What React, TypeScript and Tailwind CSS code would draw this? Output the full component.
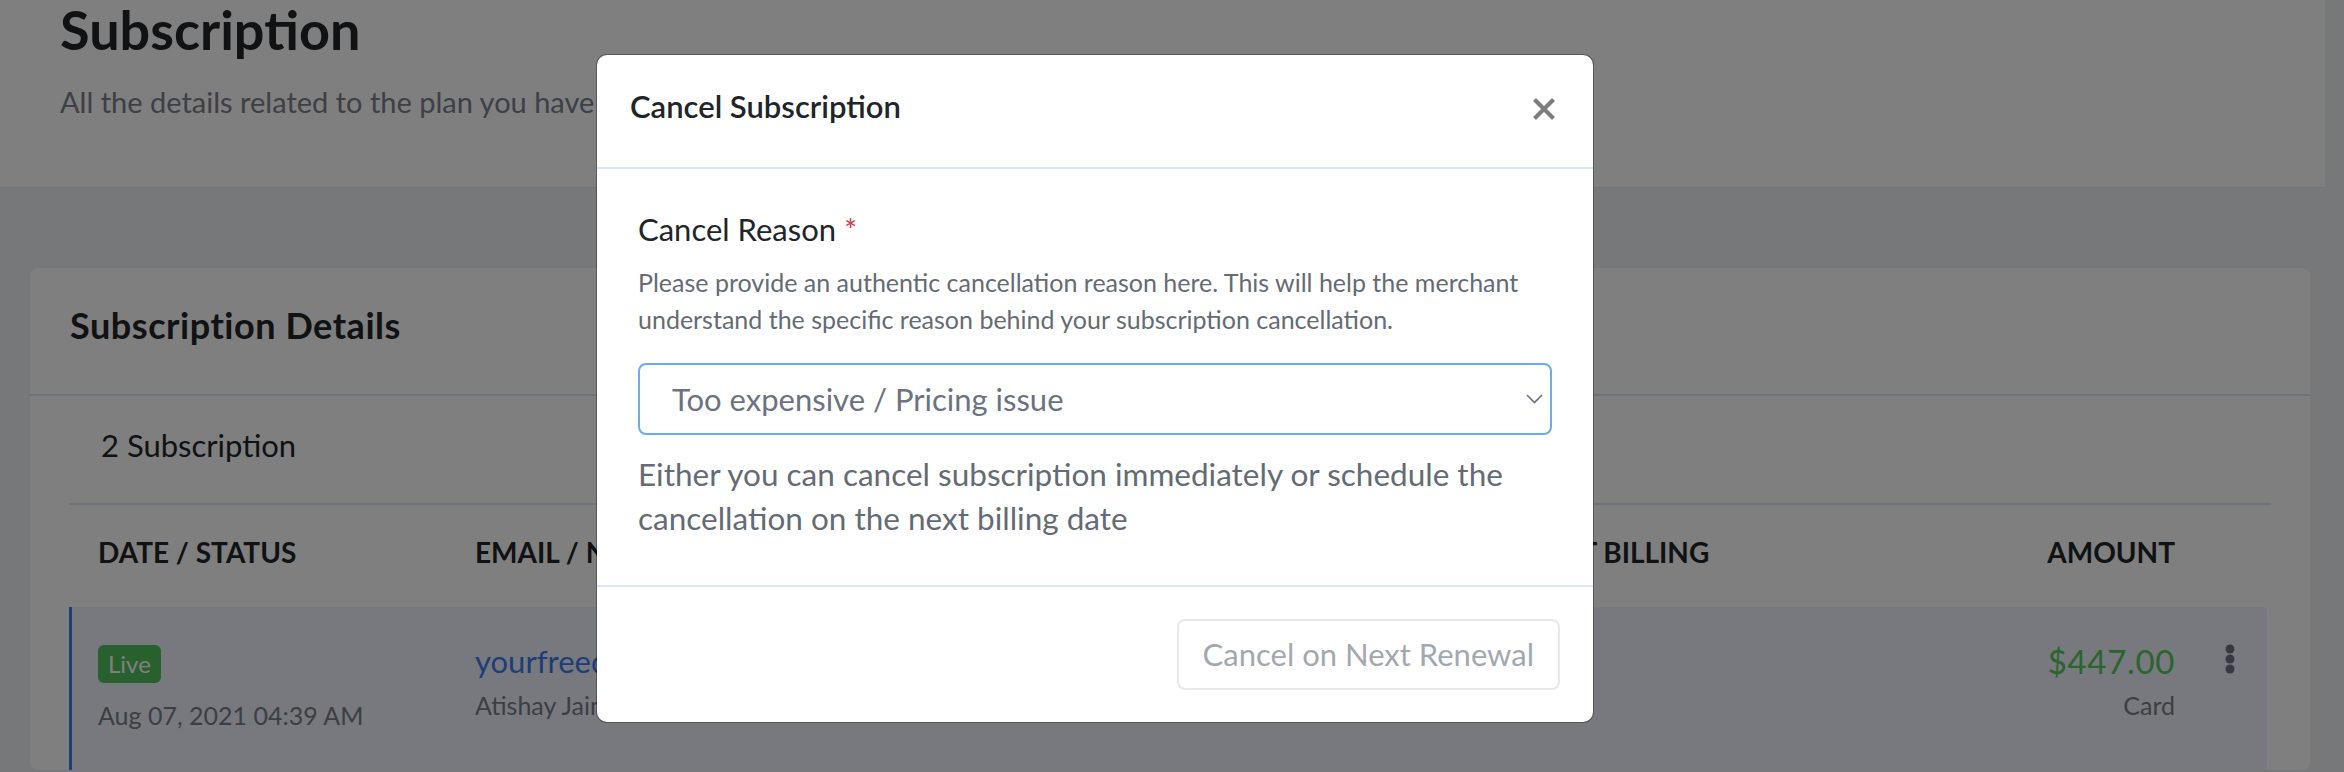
import { ReactNode } from "react";

const columns = [
  { label: "DATE / STATUS", width: "w-[377px]" },
  { label: "EMAIL / NAME", width: "w-[535px]" },
  { label: "PLAN", width: "w-[514px]" },
  { label: "NEXT BILLING", width: "w-[406px]" },
];

function KebabIcon() {
  return (
    <svg width="10" height="30" viewBox="0 0 10 30" fill="#6b7280">
      <circle cx="5" cy="5" r="4.5" />
      <circle cx="5" cy="15" r="4.5" />
      <circle cx="5" cy="25" r="4.5" />
    </svg>
  );
}

function CloseIcon() {
  return (
    <svg width="24" height="24" viewBox="0 0 24 24" fill="none" stroke="#7d7d7d" strokeWidth="4.2">
      <path d="M2.5 2.5l19 19M21.5 2.5l-19 19" />
    </svg>
  );
}

function Chevron() {
  return (
    <svg width="17" height="10" viewBox="0 0 17 10" fill="none" stroke="#6b7280" strokeWidth="1.6">
      <path d="M1 1l7.5 7.5L16 1" />
    </svg>
  );
}

function Cell({ width, children }: { width: string; children: ReactNode }) {
  return <div className={`${width} shrink-0`}>{children}</div>;
}

function SubscriptionRow() {
  return (
    <div className="flex w-[2198px] rounded-r-[4px] border-l-[3px] border-[#3b7cf5] bg-[#eff3fd] pb-[40px] pl-[26px] pt-[36px]">
      <Cell width="w-[377px]">
        <span className="mt-[2px] inline-block h-[38px] rounded-[6px] bg-[#52c25c] px-[10px] text-[24px] leading-[38px] text-white">
          Live
        </span>
        <p className="mt-[18px] text-[25px] leading-[29px] text-[#777e8a]">
          Aug 07, 2021 04:39 AM
        </p>
      </Cell>
      <Cell width="w-[535px]">
        <p className="text-[31px] leading-[36px] text-[#3d7bf0]">yourfreedomain@gmail.com</p>
        <p className="mt-[12px] text-[25px] leading-[29px] text-[#777e8a]">Atishay Jain</p>
      </Cell>
      <Cell width="w-[514px]">
        <p className="text-[31px] leading-[36px] text-[#212529]">Gold Plan</p>
      </Cell>
      <Cell width="w-[406px]">
        <span />
      </Cell>
      <div className="w-[245px] shrink-0 text-right">
        <p className="text-[33px] leading-[36px] tracking-[0.02em] text-[#56c85c]">$447.00</p>
        <p className="mt-[12px] text-[25px] leading-[29px] text-[#777e8a]">Card</p>
      </div>
      <div className="w-[95px] shrink-0 pl-[50px] pt-[1px]">
        <KebabIcon />
      </div>
    </div>
  );
}

function CancelModal() {
  return (
    <div className="absolute inset-0 flex items-start bg-black/50 pl-[597px] pt-[55px]">
      <div className="w-[996px] rounded-[10px] bg-white ring-1 ring-black/30">
        <div className="flex h-[114px] items-start justify-between border-b-2 border-[#dbe5f8] pl-[33px] pr-[37px] pt-[33px]">
          <h3 className="text-[31px] leading-[1.2] font-semibold text-[#212529]">
            Cancel Subscription
          </h3>
          <button className="mt-[9px]">
            <CloseIcon />
          </button>
        </div>

        <div className="px-[41px] pb-[45px] pt-[43px]">
          <label className="block text-[31px] leading-[34px] text-[#212529]">
            Cancel Reason <span className="text-[#dc3545]">*</span>
          </label>
          <p className="mt-[18px] text-[25px] leading-[37px] text-[#646b75]">
            Please provide an authentic cancellation reason here. This will help the merchant
            understand the specific reason behind your subscription cancellation.
          </p>
          <div className="mt-[25px] flex h-[72px] items-center justify-between rounded-[8px] border-2 border-[#6aabf5] pl-[32px] pr-[7px]">
            <span className="text-[31px] leading-[36px] text-[#6b7280]">
              Too expensive / Pricing issue
            </span>
            <Chevron />
          </div>
          <p className="mt-[17px] text-[31.5px] leading-[44px] text-[#646b74]">
            Either you can cancel subscription immediately or schedule the cancellation on the
            next billing date
          </p>
        </div>

        <div className="flex justify-end border-t-2 border-[#dbe5f8] pb-[32px] pr-[33px] pt-[32px]">
          <button className="h-[71px] rounded-[8px] border-2 border-[#e6e8ec] px-[24px] text-[31px] text-[#a3a8af]">
            Cancel on Next Renewal
          </button>
        </div>
      </div>
    </div>
  );
}

export default function App() {
  return (
    <div className="relative h-[772px] overflow-hidden bg-[#eef0f4] font-['Lato','Noto_Sans',sans-serif] text-[#212529]">
      <header className="h-[188px] w-[2325px] border-b border-[#e3e6ea] bg-white pl-[60px]">
        <h1 className="text-[54px] leading-[1.1] font-bold">Subscription</h1>
        <p className="mt-[27px] text-[29px] leading-[31px] text-[#7a818c]">
          All the details related to the plan you have subscribed to.
        </p>
      </header>

      <section className="ml-[30px] mt-[80px] w-[2280px] rounded-[8px] bg-white">
        <div className="border-b-2 border-[#dde6f3] pb-[50px] pl-[40px] pt-[38px]">
          <h2 className="text-[36px] leading-[38px] tracking-[0.015em] font-bold">
            Subscription Details
          </h2>
        </div>

        <div className="px-[39px]">
          <div className="border-b-2 border-[#dde6f3] pb-[40px] pl-[32px] pt-[32px] text-[31px] leading-[35px]">
            2 Subscription
          </div>

          <div className="flex pb-[39px] pl-[29px] pt-[32px] text-[28px] leading-[31px] font-bold">
            {columns.map((c) => (
              <Cell key={c.label} width={c.width}>
                {c.label}
              </Cell>
            ))}
            <div className="w-[245px] shrink-0 text-right">AMOUNT</div>
            <div className="w-[95px] shrink-0" />
          </div>

          <SubscriptionRow />
        </div>
      </section>

      <CancelModal />
    </div>
  );
}
